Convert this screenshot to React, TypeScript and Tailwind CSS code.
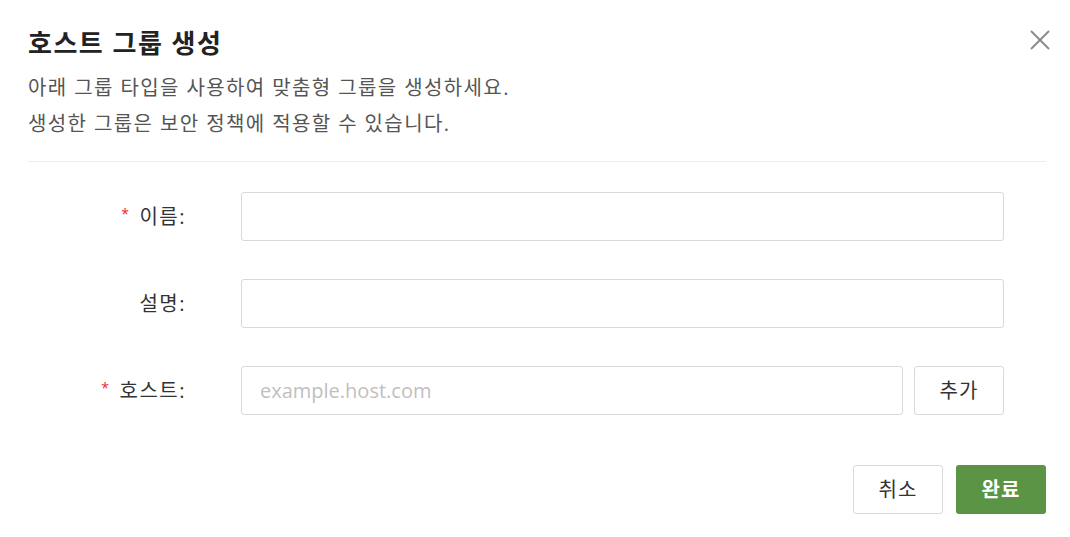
import { useState } from 'react'

const font = { fontFamily: '"Open Sans", "Noto Sans CJK KR", sans-serif' }

function Label({ text, required }: { text: string; required?: boolean }) {
  return (
    <div className="w-[158px] shrink-0 flex items-center justify-end text-[20px] tracking-[1.5px] text-[#333]">
      {required && <span className="mr-[9px] text-[14px] leading-none text-[#f5222d] -mt-[6px]">*</span>}
      <span>{text}</span>
    </div>
  )
}

export default function App() {
  const [name, setName] = useState('')
  const [desc, setDesc] = useState('')
  const [host, setHost] = useState('')

  return (
    <div className="w-[1070px] h-[537px] bg-white pl-[28px] pr-[24px] pt-[26px]" style={font}>
      <div className="flex justify-between">
        <div>
          <h1 className="text-[26px] leading-[34px] font-bold tracking-[1.5px] text-[#222]">호스트 그룹 생성</h1>
          <p className="mt-[10px] text-[20px] leading-[36px] tracking-[1.4px] text-[#555]">
            아래 그룹 타입을 사용하여 맞춤형 그룹을 생성하세요.
            <br />
            생성한 그룹은 보안 정책에 적용할 수 있습니다.
          </p>
        </div>
        <button className="-mr-[4px] mt-[4px] h-[20px] w-[20px] text-[#888]">
          <svg viewBox="0 0 20 20" width="20" height="20" fill="none" stroke="currentColor" strokeWidth="1.8">
            <path d="M1 1L19 19M19 1L1 19" />
          </svg>
        </button>
      </div>

      <div className="mt-[19px] border-t border-[#ececec]" />

      <div className="mt-[30px] flex flex-col gap-[38px]">
        <div className="flex items-center">
          <Label text="이름:" required />
          <input
            value={name}
            onChange={(e) => setName(e.target.value)}
            className="ml-[55px] h-[49px] w-[763px] rounded-[3px] border border-[#d9d9d9] px-[18px] text-[20px] outline-none"
          />
        </div>
        <div className="flex items-center">
          <Label text="설명:" />
          <input
            value={desc}
            onChange={(e) => setDesc(e.target.value)}
            className="ml-[55px] h-[49px] w-[763px] rounded-[3px] border border-[#d9d9d9] px-[18px] text-[20px] outline-none"
          />
        </div>
        <div className="flex items-center">
          <Label text="호스트:" required />
          <input
            value={host}
            onChange={(e) => setHost(e.target.value)}
            placeholder="example.host.com"
            className="ml-[55px] h-[49px] w-[662px] rounded-[3px] border border-[#d9d9d9] px-[18px] text-[20px] text-[#333] placeholder:text-[#bfbfbf] outline-none"
          />
          <button className="ml-[11px] h-[49px] w-[90px] rounded-[3px] border border-[#d9d9d9] bg-white text-[20px] tracking-[1px] text-[#333]">
            추가
          </button>
        </div>
      </div>

      <div className="mt-[50px] flex justify-end gap-[13px]">
        <button className="h-[49px] w-[90px] rounded-[3px] border border-[#d9d9d9] bg-white text-[20px] tracking-[1px] text-[#333]">
          취소
        </button>
        <button className="h-[49px] w-[90px] rounded-[3px] bg-[#5a9444] text-[20px] font-semibold tracking-[1px] text-white">
          완료
        </button>
      </div>
    </div>
  )
}
